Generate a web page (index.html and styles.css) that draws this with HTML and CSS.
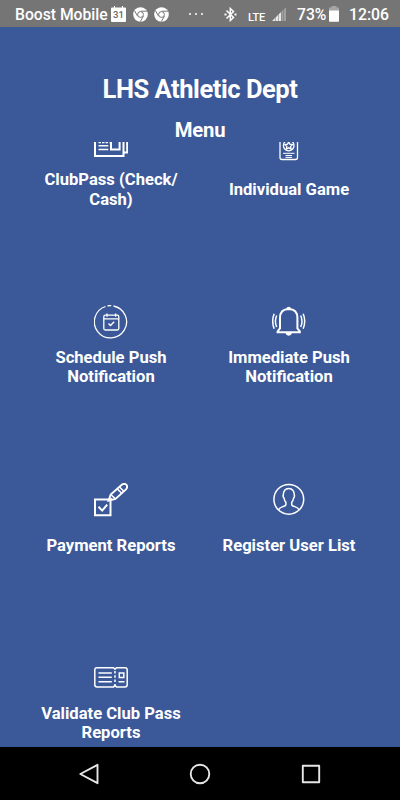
FILE: index.html
```html
<!DOCTYPE html>
<html lang="en">

<head>
  <meta charset="UTF-8">
  <meta name="viewport" content="width=device-width, initial-scale=1.0">
  <title>LHS Athletic Dept</title>
  <link rel="stylesheet" href="styles.css">
</head>

<body>
  <div class="status">
    <span class="carrier">Boost Mobile</span>
    <svg class="cal" width="15" height="17" viewBox="0 0 15 17">
      <path d="M1 1.500h2V0h1v1.500h7V0h1v1.500h2q1 0 1 1V15q0 1-1 1H1q-1 0-1-1V2.500q0-1 1-1z" fill="#fff"/>
      <text x="7.500" y="12.300" text-anchor="middle">31</text>
    </svg>
    <svg class="chrome" width="15" height="15" viewBox="0 0 15 15">
      <circle cx="7.500" cy="7.500" r="7.300" fill="#fff"/>
      <path d="M7.500 4.200h6.400M4.600 9.100L1.500 3.700M10.400 9.100l-3.100 5.500" stroke="#757575"/>
      <circle cx="7.500" cy="7.500" r="2.900" fill="#fff" stroke="#757575"/>
    </svg>
    <svg class="chrome second" width="15" height="15" viewBox="0 0 15 15">
      <circle cx="7.500" cy="7.500" r="7.300" fill="#fff"/>
      <path d="M7.500 4.200h6.400M4.600 9.100L1.500 3.700M10.400 9.100l-3.100 5.500" stroke="#757575"/>
      <circle cx="7.500" cy="7.500" r="2.900" fill="#fff" stroke="#757575"/>
    </svg>
    <svg class="more" width="14" height="2" viewBox="0 0 14 2">
      <path d="M0 0h2v2H0zM6 0h2v2H6zM12 0h2v2h-2z" fill="#ddd"/>
    </svg>
    <svg class="bluetooth" width="13" height="15" viewBox="0 0 13 15">
      <path d="M2.500 3.500l7 7-3.200 3V1.500l3.200 3-7 7" fill="none" stroke="#fff" stroke-width="1.500"/>
      <path d="M.5 6.600h2v2h-2zM10.500 6.600h2v2h-2z" fill="#fff"/>
    </svg>
    <span class="lte">LTE</span>
    <svg class="signal" width="15" height="14" viewBox="0 0 15 14">
      <path d="M0 14l3-3v3zM3.500 10.500l2.500-2.500v6H3.500zM6.500 7.500L9 5v9H6.500z" fill="#e8e8e8"/>
      <path d="M9.500 4.500l2-2V14h-2zM12 2l2-1.500V14h-2z" fill="#a0a0a0"/>
    </svg>
    <span class="percent">73%</span>
    <svg class="battery" width="10" height="16" viewBox="0 0 10 16">
      <path d="M0 1.500h2.500V0h5v1.500H10V5H0z" fill="#a5a5a5"/>
      <path d="M0 4.500h10V15q0 .8-.8.8H.8Q0 15.800 0 15z" fill="#fff"/>
    </svg>
    <span class="clock">12:06</span>
  </div>

  <header>
    <h1>LHS Athletic Dept</h1>
    <h2>Menu</h2>
  </header>

  <main>
    <ul class="menu">
      <li>
        <svg class="icon" viewBox="0 0 34 34">
          <path d="M1 9v20h28.500V9M29.500 25.500h3.700V9" stroke-width="2"/>
          <path d="M4.500 15.500h11" stroke-dasharray="2.500 1"/>
          <path d="M4.500 18.800h9.800M4.500 22.500h9.800" stroke-width="1.600"/>
          <path d="M17 14h8.600v8.500H17z" stroke-width="2"/>
        </svg>
        <p>ClubPass (Check/<br>Cash)</p>
      </li>
      <li>
        <svg class="icon" viewBox="0 0 34 34">
          <path d="M8 8v22.500q0 2 2 2h13.500q2 0 2-2V8"/>
          <circle cx="16.700" cy="18.500" r="5.300"/>
          <path d="M16.700 14.800l1.200 2.400 2.600.4-1.900 1.800.5 2.600-2.400-1.200-2.400 1.200.5-2.600-1.900-1.800 2.600-.4z"/>
          <path d="M11 26.300h11.500M13.500 28.500h6.500M13.500 30.400h6.500" stroke-width="1"/>
        </svg>
        <p>Individual Game</p>
      </li>
      <li>
        <svg class="icon" viewBox="0 0 34 34">
          <path d="M19.500 1A16.100 16.100 0 1 1 11.500 1.500M13.500.8A16.100 16.100 0 0 1 17.200.6"/>
          <rect x="9.800" y="10.200" width="15" height="14.800" rx="1.500"/>
          <path d="M9.800 13.800h15M13 8.500v3.300M21.600 8.500v3.300"/>
          <path d="M14.500 18.500l2 2 3.700-3.700" stroke-width="1.400"/>
        </svg>
        <p>Schedule Push<br>Notification</p>
      </li>
      <li>
        <svg class="icon" viewBox="0 0 34 34">
          <path d="M5.600 27.300v-1l2.400-2.800V13q0-8.700 8.700-8.900 8.700.2 8.700 8.900v10.500l2.400 2.800v1z" stroke-width="2"/>
          <path d="M14.200 4q.5-2.300 2.500-2.300T19.200 4zM13.400 28h6.600q-.8 2.700-3.300 2.700T13.400 28z" fill="#fff" stroke="none"/>
          <path d="M4.700 10.500q-2.600 5.800 0 11.500M28.700 10.500q2.600 5.800 0 11.500M2.200 8.800q-3 7.400 0 15M31.200 8.800q3 7.400 0 15" stroke-width="1.500"/>
        </svg>
        <p>Immediate Push<br>Notification</p>
      </li>
      <li>
        <svg class="icon" viewBox="0 0 34 34">
          <path d="M1 16.500h15.500v15.700H1z" stroke-width="2"/>
          <path d="M4.500 23.800l3.700 3.800 5-6" stroke-width="2"/>
          <path d="M14.500 17.700l2.200-6.200L27.500 2q2.700-2.300 4.700-.3t-.2 4.700L21.500 16z" stroke-width="1.900"/>
          <path d="M17 11.700l4.400 4.200M23.300 5.900l4.400 4.300M25.500 4l4.300 4.300M14.500 17.700l3-2.500" stroke-width="1.500"/>
        </svg>
        <p>Payment Reports</p>
      </li>
      <li>
        <svg class="icon" viewBox="0 0 34 34">
          <circle cx="16.800" cy="16.300" r="14.900" stroke-width="1.500"/>
          <path d="M6.500 27q.8-2.200 3.700-3.100 3.600-1 3.700-2.300v-2.300q-1.600-1.700-1.800-4.100-1.200-.8-.9-2.800.2-7 5.600-7t5.600 7q.3 2-.9 2.800-.2 2.400-1.800 4.100v2.300q.1 1.300 3.700 2.300 2.900.9 3.700 3.100" stroke-width="1.500"/>
        </svg>
        <p>Register User List</p>
      </li>
      <li>
        <svg class="icon" viewBox="0 0 34 34">
          <path d="M19.500 7.700H3q-2.200 0-2.200 2.200v14.800q0 2.200 2.200 2.200h16.500l1.500-1.500 1.500 1.500H31q2.200 0 2.200-2.200V9.900q0-2.200-2.200-2.200h-8.500L21 9.200z" stroke-width="1.500"/>
          <path d="M4.500 13h13.300M4.500 17.300h13.300M4.500 21.700h13.300M24.500 21.700h6" stroke-width="1.500"/>
          <path d="M21 11v14" stroke-width="1.500" stroke-dasharray="2.500 1.800"/>
          <path d="M25.300 13h4.500v4.600h-4.500z" stroke-width="1.500"/>
        </svg>
        <p>Validate Club Pass<br>Reports</p>
      </li>
    </ul>
  </main>

  <nav>
    <svg viewBox="0 0 24 24"><path d="M20.500 2.800v18.400L3.300 12z"/></svg>
    <svg viewBox="0 0 24 24"><circle cx="12" cy="12" r="9.300"/></svg>
    <svg viewBox="0 0 24 24"><path d="M3.800 3.800h16.400v16.400H3.800z"/></svg>
  </nav>
</body>

</html>
```
FILE: styles.css
```css
* {
  box-sizing: border-box;
}

body {
  margin: 0;
  width: 400px;
  height: 800px;
  display: flex;
  flex-direction: column;
  overflow: hidden;
  background: #3b5998;
  color: #fff;
  font-family: Roboto, "Liberation Sans", sans-serif;
}

svg {
  display: block;
  flex: none;
}

.status {
  height: 27px;
  flex: none;
  display: flex;
  align-items: center;
  padding: 1px 0 0 15px;
  background: #757575;
  font-size: 16px;
  font-weight: 500;
  white-space: nowrap;
}

.carrier {
  width: 93px;
  margin-right: 3px;
  font-size: 15.7px;
}

.cal {
  margin-right: 7px;
}

.cal text {
  font-size: 9.5px;
  font-weight: 500;
  fill: #666;
}

.second {
  margin-left: 6px;
}

.more {
  margin-left: 20px;
}

.bluetooth {
  margin-left: 21px;
}

.lte {
  width: 18px;
  margin: 7px 0 0 11px;
  font-size: 11px;
  letter-spacing: -0.2px;
}

.signal {
  margin-left: 6px;
}

.percent {
  width: 30px;
  margin-left: 10px;
  font-size: 15.7px;
}

.battery {
  margin-left: 2px;
}

.clock {
  margin-left: 10px;
  font-size: 15.8px;
}

header {
  height: 115px;
  flex: none;
  padding-top: 47px;
  text-align: center;
}

h1 {
  margin: 0;
  font-size: 25.5px;
  line-height: 30px;
  font-weight: 700;
  letter-spacing: -0.45px;
}

h2 {
  margin: 14px 0 0;
  font-size: 20.3px;
  line-height: 25px;
  font-weight: 700;
  letter-spacing: -0.2px;
}

main {
  flex: 1;
  min-height: 0;
  overflow: hidden;
}

/* list is scrolled a little under the header */
.menu {
  margin: -15px 22px 0;
  padding: 0;
  list-style: none;
  display: grid;
  grid-template-columns: 1fr 1fr;
  grid-auto-rows: 177.8px;
}

.menu li {
  display: flex;
  flex-direction: column;
  align-items: center;
}

.icon {
  width: 34px;
  height: 34px;
  fill: none;
  stroke: #fff;
  stroke-width: 1.3;
}

.menu p {
  height: 40px;
  margin: 8.7px 0 0;
  display: grid;
  align-content: center;
  font-size: 16.6px;
  line-height: 19.5px;
  font-weight: 700;
  text-align: center;
  white-space: nowrap;
}

nav {
  height: 53px;
  flex: none;
  display: flex;
  justify-content: center;
  align-items: center;
  gap: 87px;
  background: #000;
}

nav svg {
  width: 24px;
  height: 24px;
  fill: none;
  stroke: #e6e6e6;
  stroke-width: 1.9;
  stroke-linejoin: round;
}
```
